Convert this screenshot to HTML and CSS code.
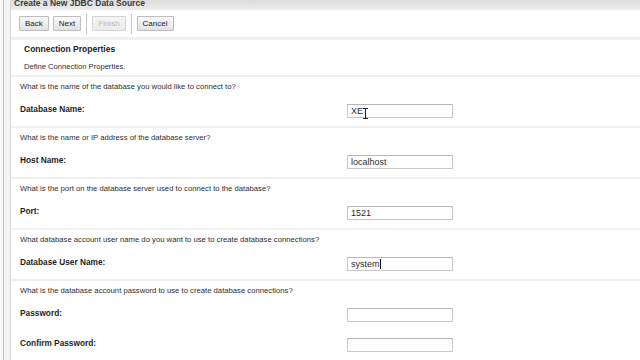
FILE: index.html
```html
<!DOCTYPE html>
<html lang="en">
<head>
  <meta charset="UTF-8" />
  <title>Create a New JDBC Data Source</title>
  <link rel="stylesheet" href="styles.css">
</head>
<body>
  <div class="frame">
    <div class="page">
      <div class="title"><span class="title-text">Create a New JDBC Data Source</span></div>

      <div class="toolbar">
        <button class="btn">Back</button>
        <button class="btn">Next</button>
        <span class="sep"></span>
        <button class="btn" disabled>Finish</button>
        <span class="sep"></span>
        <button class="btn">Cancel</button>
      </div>

      <div class="intro">
        <h2>Connection Properties</h2>
        <p>Define Connection Properties.</p>
      </div>

      <div class="row">
        <p class="question">What is the name of the database you would like to connect to?</p>
        <div class="field">
          <label>Database Name:</label>
          <div class="input">XE<svg class="ibeam" width="5" height="11" viewBox="0 0 5 11"><path d="M0 0.5h5M2.5 0.5v10M0 10.5h5" stroke="#222" stroke-width="1" fill="none"/></svg></div>
        </div>
      </div>

      <div class="row">
        <p class="question">What is the name or IP address of the database server?</p>
        <div class="field">
          <label>Host Name:</label>
          <div class="input">localhost</div>
        </div>
      </div>

      <div class="row">
        <p class="question">What is the port on the database server used to connect to the database?</p>
        <div class="field">
          <label>Port:</label>
          <div class="input">1521</div>
        </div>
      </div>

      <div class="row">
        <p class="question">What database account user name do you want to use to create database connections?</p>
        <div class="field">
          <label>Database User Name:</label>
          <div class="input">system<span class="caret"></span></div>
        </div>
      </div>

      <div class="row">
        <p class="question">What is the database account password to use to create database connections?</p>
        <div class="field">
          <label>Password:</label>
          <div class="input"></div>
        </div>
        <div class="field confirm">
          <label>Confirm Password:</label>
          <div class="input"></div>
        </div>
      </div>
    </div>
  </div>
</body>
</html>
```

FILE: styles.css
```css
html, body {
  margin: 0;
  padding: 0;
  background: #fff;
  font-family: "Liberation Sans", Arial, sans-serif;
  color: #333;
  overflow: hidden;
}

.frame {
  height: 360px;
  padding-left: 3px;
  background: #f7f7f7;
  display: flex;
}

.page {
  flex: 1;
  border-left: 1px solid #c4c4c4;
  box-shadow: inset 6px 0 0 #f3f3f3, inset 7px 0 0 #d6d6d6;
  background: #fff;
  padding-left: 7px;
}

.title {
  height: 10px;
  overflow: hidden;
  background: linear-gradient(#dcdcdc, #ececec);
  padding-left: 3px;
}

.title-text {
  display: block;
  margin-top: -3px;
  line-height: 12px;
  font-size: 8.5px;
  font-weight: bold;
  color: #3a3a3a;
}

.toolbar {
  height: 27px;
  display: flex;
  align-items: center;
  padding-left: 8px;
  gap: 4px;
  border-bottom: 3px solid #f0f0f0;
}

.btn {
  height: 15px;
  padding: 0 5px;
  font-family: "Liberation Sans", Arial, sans-serif;
  font-size: 8px;
  color: #222;
  background: linear-gradient(#fafafa, #e2e2e2);
  border: 1px solid #bdbdbd;
  border-radius: 1px;
  min-width: 27px;
}

.btn:disabled {
  color: #b8b8b8;
  border-color: #d4d4d4;
  background: linear-gradient(#f6f6f6, #ebebeb);
}

.sep {
  width: 1px;
  height: 20px;
  background: #c8c8c8;
  margin: 0 1px;
}

.intro {
  height: 35px;
  padding-left: 13px;
}

.intro h2 {
  margin: 0;
  padding-top: 3px;
  font-size: 8.5px;
  line-height: 12px;
  color: #222;
}

.intro p {
  margin: 0;
  padding-top: 6px;
  font-size: 7.6px;
  line-height: 12px;
  color: #2e2e2e;
}

.row {
  height: 49px;
  border-top: 2px solid #f0f0f0;
  padding-left: 9px;
}

.question {
  margin: 0;
  padding-top: 4px;
  font-size: 7.7px;
  line-height: 12px;
  color: #2e2e2e;
}

.field {
  display: flex;
  align-items: flex-start;
  margin-top: 11px;
}

.field.confirm {
  margin-top: 16px;
}

.field label {
  width: 327px;
  font-size: 8.3px;
  font-weight: bold;
  line-height: 10px;
  color: #1e1e1e;
}

.input {
  position: relative;
  box-sizing: border-box;
  width: 106px;
  height: 14px;
  border: 1px solid #c9c9c9;
  border-top-color: #b8b8b8;
  padding-left: 3px;
  font-size: 9px;
  line-height: 12px;
  color: #2e2e2e;
  display: flex;
  align-items: center;
}

.ibeam {
  position: absolute;
  left: 15px;
  top: 3px;
}

.caret {
  display: inline-block;
  width: 1px;
  height: 10px;
  background: #111;
}
```
